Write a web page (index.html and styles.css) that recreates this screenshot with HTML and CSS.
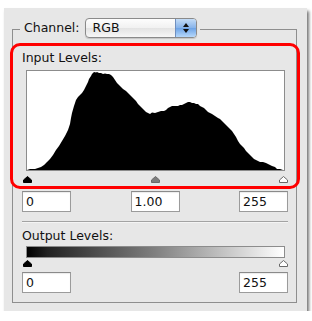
FILE: index.html
```html
<!DOCTYPE html>
<html>
<head>
<meta charset="utf-8">
<link rel="stylesheet" href="styles.css">
</head>
<body>
<div class="panel">
  <div class="group">
    <div class="legend">
      <span class="legend-label">Channel:</span>
      <div class="select">
        <span class="select-text">RGB</span>
        <span class="select-arrows">
          <svg width="8" height="12" viewBox="0 0 8 12"><polygon points="4,1 7,5 1,5" fill="#111"/><polygon points="1,7 7,7 4,11" fill="#111"/></svg>
        </span>
      </div>
    </div>
    <div class="highlight">
      <div class="label">Input Levels:</div>
      <div class="histogram">
        <svg width="257" height="99" viewBox="27 71 257 99" preserveAspectRatio="none">
          <polygon fill="#000" points="27,170 30,169 35,169 38,168 41,167 44,165 47,162 50,159 53,155 56,150 59,146 62,141 65,136 68,130 70,124 71,118 72,113 74,106 76,100 78,97 80,95 82,93 84,90 86,86 88,82 89,79 91,76 92,74 94,72 96,72.5 97,72 99,73 101,73 103,74 105,73.5 107,74 109,74 111,75 113,77 115,80 117,83 119,85 121,87 123,89 126,91 128,93 130,95 132,97 134,99 136,101 138,104 140,106 142,108 144,110 146,112 148,113 150,114 152,112.5 155,113 158,112 161,111 164,111 166,110 168,108 170,107 172,106 175,106 178,106 180,105 182,105 184,104 186,103 188,102 190,102 192,103 194,103 196,104 198,104 200,106 202,107 204,108 206,110 208,112 210,113 212,114 215,116 218,118 220,119 222,121 224,123 226,125 228,127 230,129 232,131 234,134 236,137 238,141 240,144 242,146 244,148 246,151 248,153 250,155 252,157 254,159 256,160 258,161 260,162 263,162 266,163 268,164 270,165 272,166 275,167 277,169 280,169 283,170 284,170"/>
        </svg>
      </div>
      <div class="sliders">
        <svg class="knob" width="9" height="7" viewBox="0 0 9 7"><polygon points="4.5,0.5 8.5,4 8.5,6.5 0.5,6.5 0.5,4" fill="#000" stroke="#000"/></svg>
        <svg class="knob" width="9" height="7" viewBox="0 0 9 7"><polygon points="4.5,0.5 8.5,4 8.5,6.5 0.5,6.5 0.5,4" fill="#7d7d7d" stroke="#6a6a6a"/></svg>
        <svg class="knob" width="9" height="7" viewBox="0 0 9 7"><polygon points="4.5,0.5 8.5,4 8.5,6.5 0.5,6.5 0.5,4" fill="#fff" stroke="#6a6a6a"/></svg>
      </div>
    </div>
    <div class="fields">
      <div class="field">0</div>
      <div class="field">1.00</div>
      <div class="field">255</div>
    </div>
    <div class="separator"></div>
    <div class="label output-label">Output Levels:</div>
    <div class="gradient"></div>
    <div class="sliders out-sliders">
      <svg class="knob" width="9" height="7" viewBox="0 0 9 7"><polygon points="4.5,0.5 8.5,4 8.5,6.5 0.5,6.5 0.5,4" fill="#000" stroke="#000"/></svg>
      <svg class="knob" width="9" height="7" viewBox="0 0 9 7"><polygon points="4.5,0.5 8.5,4 8.5,6.5 0.5,6.5 0.5,4" fill="#fff" stroke="#6a6a6a"/></svg>
    </div>
    <div class="fields out-fields">
      <div class="field">0</div>
      <div class="field">255</div>
    </div>
  </div>
</div>
</body>
</html>
```
FILE: styles.css
```css
html, body {
  margin: 0;
  padding: 0;
  background: #ffffff;
}
body {
  font-family: "DejaVu Sans", "Liberation Sans", sans-serif;
  font-size: 12.5px;
  color: #111;
}
.panel {
  margin: 8px 0 0 4px;
  width: 303px;
  box-sizing: border-box;
  background: #e7e7e7;
  padding: 21px 0 8px 8px;
  box-shadow: 2px 3px 3px rgba(0, 0, 0, 0.55);
}
.group {
  width: 285px;
  box-sizing: border-box;
  border: 1px solid #8e8e8e;
  padding: 0 8px 9px 9px;
}
.legend {
  display: flex;
  align-items: center;
  width: max-content;
  height: 20px;
  margin: -12px 0 0 -2px;
  padding: 0 3px 0 4px;
  background: #e7e7e7;
}
.legend-label {
  margin-right: 5px;
  line-height: 20px;
}
.select {
  width: 112px;
  height: 20px;
  box-sizing: border-box;
  border: 1px solid #8a8a8a;
  border-radius: 4px;
  background: linear-gradient(#fdfdfd, #f1f1f1 50%, #e3e3e3 51%, #f7f7f7);
  display: flex;
  overflow: hidden;
  box-shadow: 0 1px 1px rgba(0,0,0,0.15);
}
.select-text {
  flex: 1;
  padding-left: 7px;
  line-height: 18px;
}
.select-arrows {
  width: 20px;
  display: flex;
  align-items: center;
  justify-content: center;
  border-left: 1px solid #6f8fbf;
  background: linear-gradient(#c4dcf7, #86b3ea 50%, #6da3e6 51%, #b6d8fb);
}
.highlight {
  width: 290px;
  box-sizing: border-box;
  margin: 5px 0 0 -12px;
  border: 3px solid #ff0000;
  border-radius: 10px;
  padding: 4px 9px 3px 9px;
}
.label {
  line-height: 16px;
  height: 16px;
}
.histogram {
  width: 259px;
  height: 101px;
  box-sizing: border-box;
  margin: 4px 0 0 4px;
  border: 1px solid #8c8c8c;
  background: #fff;
}
.histogram svg {
  display: block;
}
.sliders {
  display: flex;
  justify-content: space-between;
  width: 265px;
  margin: 5px 0 0 1px;
  height: 7px;
}
.knob {
  display: block;
}
.fields {
  display: flex;
  justify-content: space-between;
  margin-top: 2px;
}
.field {
  width: 49px;
  height: 21px;
  box-sizing: border-box;
  border: 1px solid #9b9b9b;
  border-top-color: #8a8a8a;
  background: #fff;
  padding-left: 3px;
  line-height: 19px;
  box-shadow: inset 0 1px 1px rgba(0,0,0,0.08);
}
.separator {
  margin-top: 9px;
  height: 1px;
  background: #a3a3a3;
  border-bottom: 1px solid #f4f4f4;
}
.output-label {
  margin-top: 5px;
}
.gradient {
  width: 259px;
  height: 12px;
  box-sizing: border-box;
  margin: 2px 0 0 4px;
  border: 1px solid #8c8c8c;
  background: linear-gradient(to right, #000, #222 8%, #808080 50%, #fff);
}
.out-sliders {
  margin-top: 2px;
}
.out-fields {
  margin-top: 5px;
}
```
